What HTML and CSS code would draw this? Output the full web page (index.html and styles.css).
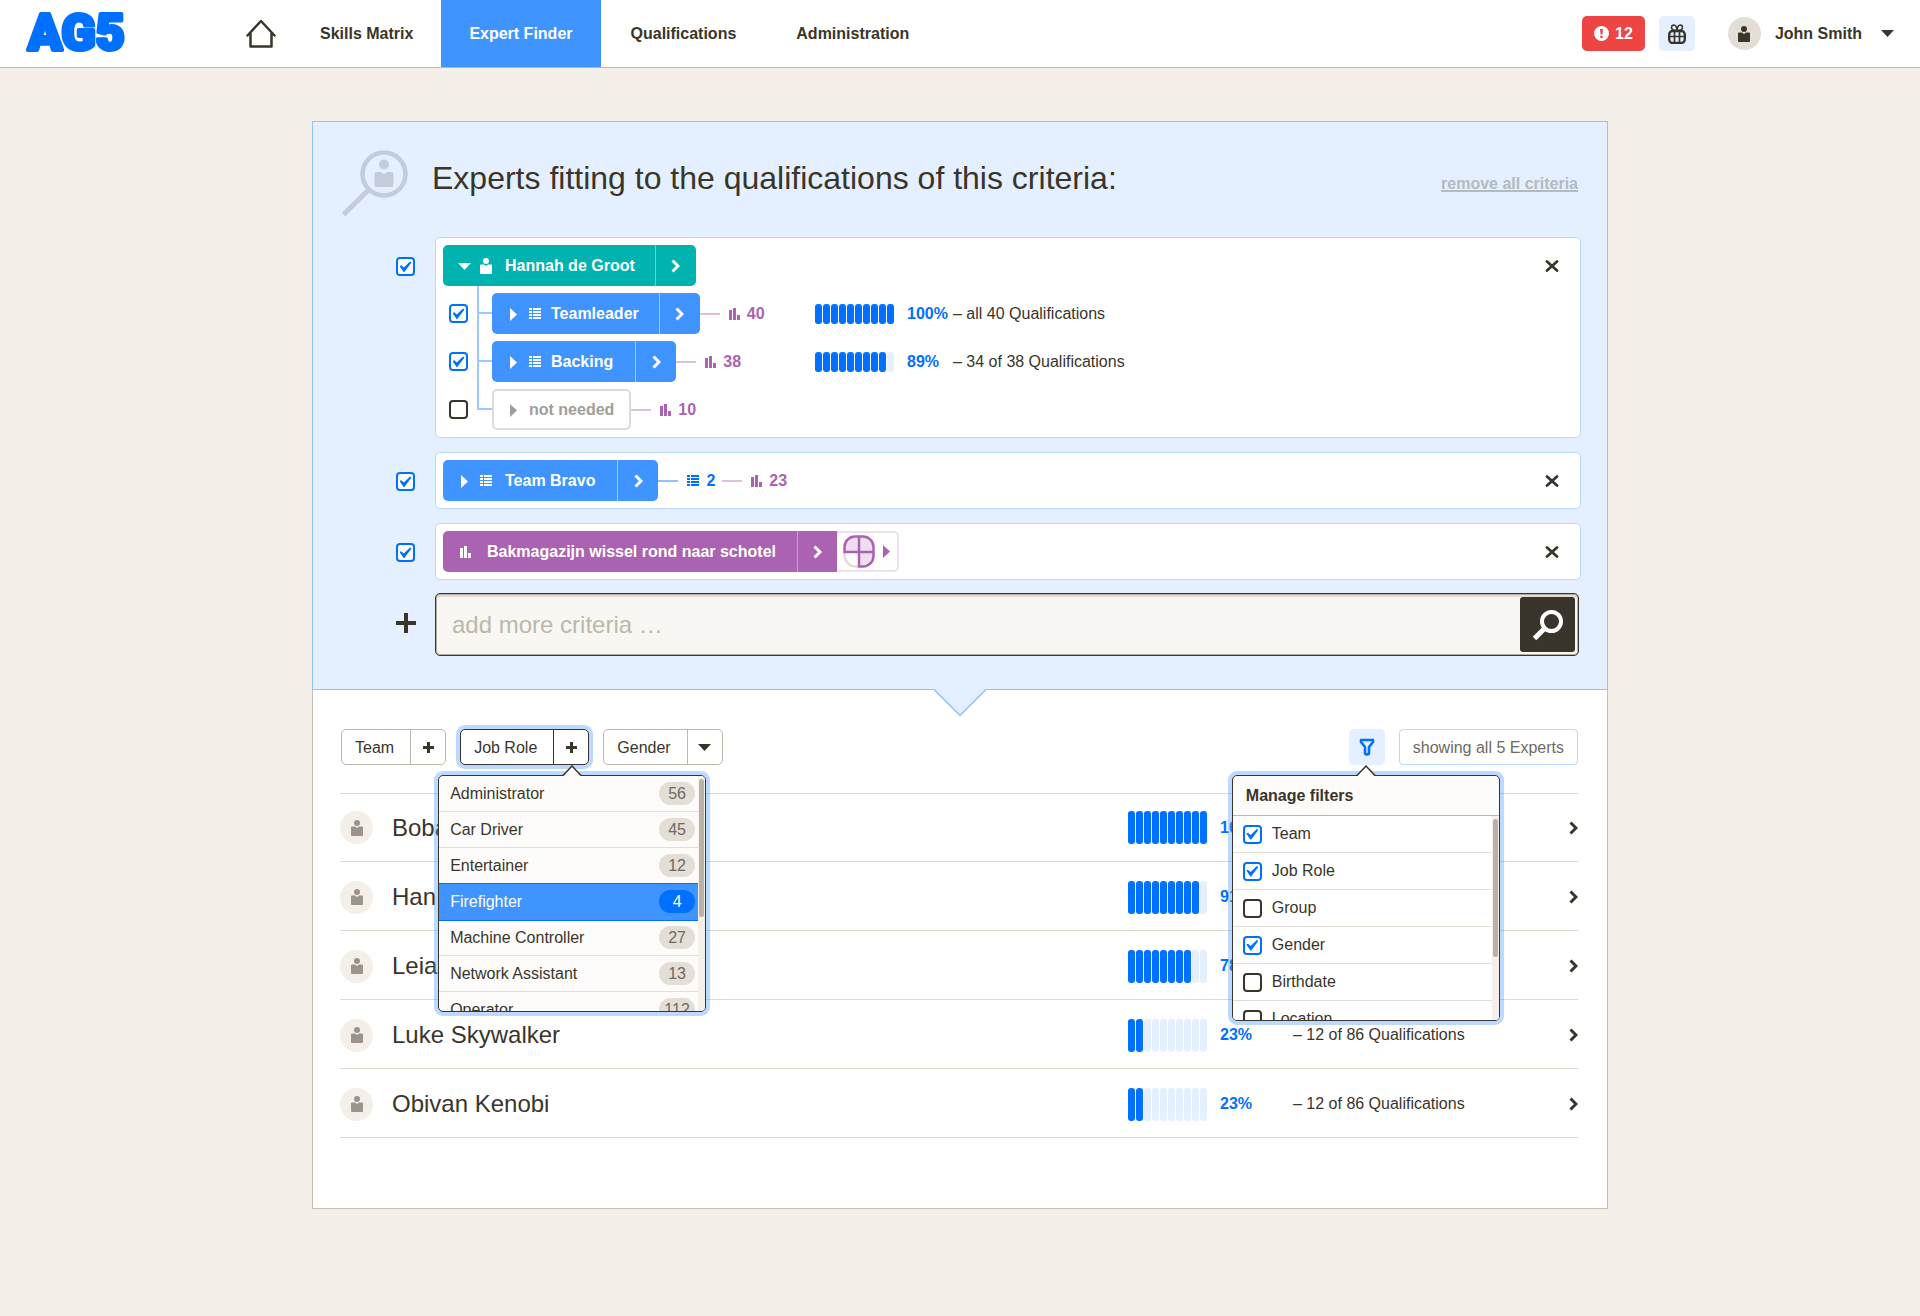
FILE: index.html
```html
<!DOCTYPE html>
<html lang="en">
<head>
<meta charset="utf-8">
<meta name="viewport" content="width=device-width, initial-scale=1">
<title>AG5 – Expert Finder</title>
<link rel="stylesheet" href="styles.css">
</head>
<body>
<svg class="sprite" aria-hidden="true">
  <symbol id="person" viewBox="0 0 12 16"><circle cx="6" cy="3" r="3"/><path d="M1 6.500h3l2 1.500 2-1.500h3a1 1 0 0 1 1 1V15a1 1 0 0 1-1 1H1a1 1 0 0 1-1-1V7.500a1 1 0 0 1 1-1z"/></symbol>
  <symbol id="list" viewBox="0 0 12 12"><path d="M0 0h3v2H0zM4 0h8v2H4zM0 3h3v2H0zM4 3h8v2H4zM0 6h3v2H0zM4 6h8v2H4zM0 9h3v2H0zM4 9h8v2H4z"/></symbol>
  <symbol id="stats" viewBox="0 0 11 12"><path d="M0 2h3v10H0zM4 0h3v12H4zM8 7h3v5H8z"/></symbol>
  <symbol id="down" viewBox="0 0 13 7"><path d="M0 0h13L6.500 7z"/></symbol>
  <symbol id="right" viewBox="0 0 7 13"><path d="M0 0l7 6.500-7 6.500z"/></symbol>
  <symbol id="chevron" viewBox="0 0 9 14"><path d="M1.500 1.500L7 7l-5.500 5.500" fill="none" stroke="currentColor" stroke-width="3"/></symbol>
  <symbol id="close" viewBox="0 0 14 14"><path d="M2 2.500l10 9M12 2.500L2 11.500" fill="none" stroke="currentColor" stroke-width="2.800" stroke-linecap="round"/></symbol>
  <symbol id="plus" viewBox="0 0 20 20"><path d="M8 0h4v8h8v4h-8v8H8v-8H0V8h8z"/></symbol>
  <symbol id="plus-small" viewBox="0 0 11 11"><path d="M4 0h3v4h4v3H7v4H4V7H0V4h4z"/></symbol>
</svg>

<header class="topbar">
  <a class="logo" href="#" aria-label="AG5 home">
    <svg width="112" height="66" viewBox="0 0 112 66"><text x="3" y="50">AG5</text></svg>
  </a>
  <nav class="nav" aria-label="Main">
    <a class="nav-home" href="#" aria-label="Home"><svg width="30" height="30" viewBox="0 0 30 30" fill="none" stroke="currentColor" stroke-width="2.500" stroke-linejoin="round" stroke-linecap="round"><path d="M1.500 16.500L15 2l13.500 14.500M4.500 14v13.500h21V14"/></svg></a>
    <a class="nav-link" href="#">Skills Matrix</a>
    <a class="nav-link active" href="#" aria-current="page">Expert Finder</a>
    <a class="nav-link" href="#">Qualifications</a>
    <a class="nav-link" href="#">Administration</a>
  </nav>
  <div class="account">
    <button class="alerts" type="button"><svg width="15" height="15" viewBox="0 0 15 15"><circle cx="7.500" cy="7.500" r="7.500" fill="#fff"/><path d="M6 3h3l-.6 5.500H6.600zM6.300 9.700h2.400V12H6.300z" fill="#ee4444"/></svg>12</button>
    <button class="gift" type="button" aria-label="What's new"><svg width="18" height="20" viewBox="0 0 18 20" fill="none" stroke="currentColor"><path d="M9 6.500C6 6.500 3.500 5.500 3.500 3.500S5 1 6 1s3 1.500 3 5.500C9 2.500 11 1 12 1s2.500.5 2.500 2.500S12 6.500 9 6.500z" stroke-width="1.500"/><rect x="1.200" y="7" width="15.600" height="12" rx="3.500" stroke-width="2.400"/><path d="M1 12.500h16M6.500 7v12M11.500 7v12" stroke-width="1.700"/></svg></button>
    <button class="user" type="button"><span class="avatar avatar-user"><svg width="12" height="16"><use href="#person"/></svg></span>John Smith<svg class="user-caret" width="13" height="7"><use href="#down"/></svg></button>
  </div>
</header>

<main class="panel">
  <section class="criteria">
    <div class="criteria-head">
      <svg class="finder" width="66" height="66" viewBox="0 0 66 66" aria-hidden="true"><circle cx="42" cy="24" r="21.500" fill="none" stroke="#c4cbd9" stroke-width="4.500"/><path d="M27 39.500L1.500 64.500" stroke="#c4cbd9" stroke-width="5"/><circle cx="42" cy="14.500" r="5" fill="#c4cbd9"/><path d="M34.500 22H39l3 2.500 3-2.500h4.500a2 2 0 0 1 2 2V35a2 2 0 0 1-2 2h-15a2 2 0 0 1-2-2V24a2 2 0 0 1 2-2z" fill="#c4cbd9"/></svg>
      <div class="headline">
        <h1>Experts fitting to the qualifications of this criteria:</h1>
        <a class="remove-all" href="#">remove all criteria</a>
      </div>
    </div>

    <div class="criterion">
      <div class="pick"><input type="checkbox" checked aria-label="Use Hannah de Groot"></div>
      <div class="card">
        <div class="card-body">
          <div class="chip teal">
            <button class="chip-main" type="button"><span class="caret"><svg width="13" height="7"><use href="#down"/></svg></span><svg class="kind" width="12" height="16"><use href="#person"/></svg>Hannah de Groot</button>
            <button class="chip-go" type="button" aria-label="Open Hannah de Groot"><svg width="9" height="14"><use href="#chevron"/></svg></button>
          </div>
          <ul class="tree">
            <li>
              <div class="branch">
                <input type="checkbox" checked aria-label="Use Teamleader">
                <div class="chip blue">
                  <button class="chip-main" type="button"><span class="caret"><svg width="7" height="13"><use href="#right"/></svg></span><svg class="kind" width="12" height="12"><use href="#list"/></svg>Teamleader</button>
                  <button class="chip-go" type="button" aria-label="Open Teamleader"><svg width="9" height="14"><use href="#chevron"/></svg></button>
                </div>
                <span class="stat purple"><svg width="11" height="12"><use href="#stats"/></svg>40</span>
              </div>
              <div class="score"><span class="bars"><i class="on"></i><i class="on"></i><i class="on"></i><i class="on"></i><i class="on"></i><i class="on"></i><i class="on"></i><i class="on"></i><i class="on"></i><i class="on"></i></span><b>100%</b><span>– all 40 Qualifications</span></div>
            </li>
            <li>
              <div class="branch">
                <input type="checkbox" checked aria-label="Use Backing">
                <div class="chip blue wide">
                  <button class="chip-main" type="button"><span class="caret"><svg width="7" height="13"><use href="#right"/></svg></span><svg class="kind" width="12" height="12"><use href="#list"/></svg>Backing</button>
                  <button class="chip-go" type="button" aria-label="Open Backing"><svg width="9" height="14"><use href="#chevron"/></svg></button>
                </div>
                <span class="stat purple"><svg width="11" height="12"><use href="#stats"/></svg>38</span>
              </div>
              <div class="score"><span class="bars"><i class="on"></i><i class="on"></i><i class="on"></i><i class="on"></i><i class="on"></i><i class="on"></i><i class="on"></i><i class="on"></i><i class="on"></i><i></i></span><b>89%</b><span>– 34 of 38 Qualifications</span></div>
            </li>
            <li>
              <div class="branch">
                <input type="checkbox" aria-label="Use not needed">
                <div class="chip muted">
                  <button class="chip-main" type="button"><span class="caret"><svg width="7" height="13"><use href="#right"/></svg></span>not needed</button>
                </div>
                <span class="stat purple"><svg width="11" height="12"><use href="#stats"/></svg>10</span>
              </div>
            </li>
          </ul>
        </div>
        <button class="close" type="button" aria-label="Remove Hannah de Groot"><svg width="14" height="14"><use href="#close"/></svg></button>
      </div>
    </div>

    <div class="criterion">
      <div class="pick"><input type="checkbox" checked aria-label="Use Team Bravo"></div>
      <div class="card">
        <div class="card-body line">
          <div class="chip blue wide">
            <button class="chip-main" type="button"><span class="caret"><svg width="7" height="13"><use href="#right"/></svg></span><svg class="kind" width="12" height="12"><use href="#list"/></svg>Team Bravo</button>
            <button class="chip-go" type="button" aria-label="Open Team Bravo"><svg width="9" height="14"><use href="#chevron"/></svg></button>
          </div>
          <span class="stat azure"><svg width="12" height="12"><use href="#list"/></svg>2</span>
          <span class="stat purple next"><svg width="11" height="12"><use href="#stats"/></svg>23</span>
        </div>
        <button class="close" type="button" aria-label="Remove Team Bravo"><svg width="14" height="14"><use href="#close"/></svg></button>
      </div>
    </div>

    <div class="criterion">
      <div class="pick"><input type="checkbox" checked aria-label="Use Bakmagazijn wissel rond naar schotel"></div>
      <div class="card">
        <div class="card-body line">
          <div class="chip violet">
            <button class="chip-main" type="button"><svg class="kind" width="11" height="12"><use href="#stats"/></svg>Bakmagazijn wissel rond naar schotel</button>
            <button class="chip-go" type="button" aria-label="Open Bakmagazijn wissel rond naar schotel"><svg width="9" height="14"><use href="#chevron"/></svg></button>
          </div>
          <button class="level" type="button" aria-label="Required level: 3 of 4"><svg width="32" height="33" viewBox="0 0 32 33"><path d="M1.500 18v2a11.500 11.500 0 0 0 11.500 11.500h2" fill="none" stroke="#e4dfd6" stroke-width="2.500"/><path d="M16 1.500h-4A10.500 10.500 0 0 0 1.500 12v5H16zM16 1.500h4A10.500 10.500 0 0 1 30.500 12v5H16zM16 17h14.500v4A10.500 10.500 0 0 1 20 31.500h-4z" fill="#eedff0" stroke="#ab63b1" stroke-width="2.500"/></svg><svg width="7" height="13"><use href="#right"/></svg></button>
        </div>
        <button class="close" type="button" aria-label="Remove Bakmagazijn wissel rond naar schotel"><svg width="14" height="14"><use href="#close"/></svg></button>
      </div>
    </div>

    <form class="criterion">
      <div class="pick"><svg width="20" height="20" aria-hidden="true"><use href="#plus"/></svg></div>
      <div class="search">
        <input type="text" placeholder="add more criteria …" aria-label="Add more criteria">
        <button type="button" aria-label="Search"><svg width="32" height="32" viewBox="0 0 32 32" fill="none" stroke="currentColor"><circle cx="19.500" cy="12.500" r="9.500" stroke-width="4"/><path d="M13 19L2.500 29.500" stroke-width="5"/></svg></button>
      </div>
    </form>
    <svg class="pointer" width="54" height="28" viewBox="0 0 54 28" aria-hidden="true"><path d="M0 0h54L27 27z" fill="#e4f0ff"/><path d="M0 .5h1L27 26.500 53 .5h1" fill="none" stroke="#91c1ff" stroke-width="1.500"/></svg>
  </section>

  <section class="results">
    <div class="toolbar">
      <div class="filter"><button class="filter-name" type="button">Team</button><button class="filter-add" type="button" aria-label="Add team"><svg width="11" height="11"><use href="#plus-small"/></svg></button></div>
      <div class="anchor">
        <div class="filter open"><button class="filter-name" type="button">Job Role</button><button class="filter-add" type="button" aria-label="Add job role" aria-expanded="true"><svg width="11" height="11"><use href="#plus-small"/></svg></button></div>
        <div class="popup roles">
          <svg class="tip" width="20" height="11" viewBox="0 0 20 11" aria-hidden="true"><path d="M0 11L10 1l10 10z" fill="#fdfcfa"/><path d="M0 10.500h1L10 1l9 9.500h1" fill="none" stroke="#3a352b" stroke-width="1.500"/></svg>
          <div class="popup-scroll">
            <ul class="options">
              <li><button type="button">Administrator<span class="count">56</span></button></li>
              <li><button type="button">Car Driver<span class="count">45</span></button></li>
              <li><button type="button">Entertainer<span class="count">12</span></button></li>
              <li class="current"><button type="button">Firefighter<span class="count">4</span></button></li>
              <li><button type="button">Machine Controller<span class="count">27</span></button></li>
              <li><button type="button">Network Assistant<span class="count">13</span></button></li>
              <li><button type="button">Operator<span class="count">112</span></button></li>
            </ul>
            <div class="track"><div class="thumb"></div></div>
          </div>
        </div>
      </div>
      <div class="filter"><button class="filter-name" type="button">Gender</button><button class="filter-add" type="button" aria-label="Choose gender"><svg width="13" height="7"><use href="#down"/></svg></button></div>
      <div class="anchor manage">
        <button class="funnel" type="button" aria-label="Manage filters" aria-expanded="true"><svg width="16" height="18" viewBox="0 0 16 18" fill="none" stroke="currentColor" stroke-width="2.600" stroke-linejoin="round"><path d="M2 2h12v2l-4 5v5.500a2 2 0 0 1-4 0V9L2 4z"/></svg></button>
        <div class="popup filters">
          <svg class="tip" width="20" height="11" viewBox="0 0 20 11" aria-hidden="true"><path d="M0 11L10 1l10 10z" fill="#fdfcfa"/><path d="M0 10.500h1L10 1l9 9.500h1" fill="none" stroke="#3a352b" stroke-width="1.500"/></svg>
          <h2>Manage filters</h2>
          <div class="popup-scroll">
            <ul class="toggles">
              <li><label><input type="checkbox" checked>Team</label></li>
              <li><label><input type="checkbox" checked>Job Role</label></li>
              <li><label><input type="checkbox">Group</label></li>
              <li><label><input type="checkbox" checked>Gender</label></li>
              <li><label><input type="checkbox">Birthdate</label></li>
              <li><label><input type="checkbox">Location</label></li>
            </ul>
            <div class="track"><div class="thumb"></div></div>
          </div>
        </div>
      </div>
      <div class="showing">showing all 5 Experts</div>
    </div>

    <ul class="experts">
      <li><a href="#"><span class="avatar"><svg width="12" height="16"><use href="#person"/></svg></span><span class="name">Boba</span><span class="bars tall"><i class="on"></i><i class="on"></i><i class="on"></i><i class="on"></i><i class="on"></i><i class="on"></i><i class="on"></i><i class="on"></i><i class="on"></i><i class="on"></i></span><b>100%</b><span></span><svg width="9" height="14"><use href="#chevron"/></svg></a></li>
      <li><a href="#"><span class="avatar"><svg width="12" height="16"><use href="#person"/></svg></span><span class="name">Han</span><span class="bars tall"><i class="on"></i><i class="on"></i><i class="on"></i><i class="on"></i><i class="on"></i><i class="on"></i><i class="on"></i><i class="on"></i><i class="on"></i><i></i></span><b>91%</b><span></span><svg width="9" height="14"><use href="#chevron"/></svg></a></li>
      <li><a href="#"><span class="avatar"><svg width="12" height="16"><use href="#person"/></svg></span><span class="name">Leia</span><span class="bars tall"><i class="on"></i><i class="on"></i><i class="on"></i><i class="on"></i><i class="on"></i><i class="on"></i><i class="on"></i><i class="on"></i><i></i><i></i></span><b>78%</b><span></span><svg width="9" height="14"><use href="#chevron"/></svg></a></li>
      <li><a href="#"><span class="avatar"><svg width="12" height="16"><use href="#person"/></svg></span><span class="name">Luke Skywalker</span><span class="bars tall"><i class="on"></i><i class="on"></i><i></i><i></i><i></i><i></i><i></i><i></i><i></i><i></i></span><b>23%</b><span>– 12 of 86 Qualifications</span><svg width="9" height="14"><use href="#chevron"/></svg></a></li>
      <li><a href="#"><span class="avatar"><svg width="12" height="16"><use href="#person"/></svg></span><span class="name">Obivan Kenobi</span><span class="bars tall"><i class="on"></i><i class="on"></i><i></i><i></i><i></i><i></i><i></i><i></i><i></i><i></i></span><b>23%</b><span>– 12 of 86 Qualifications</span><svg width="9" height="14"><use href="#chevron"/></svg></a></li>
    </ul>
  </section>
</main>
</body>
</html>
```
FILE: styles.css
```css
* { box-sizing: border-box; }

body {
  margin: 0;
  background: #f4efe8;
  color: #3a352b;
  font: 16px/20px "Liberation Sans", Arial, sans-serif;
}

button, input { font: inherit; color: inherit; }
button { margin: 0; padding: 0; border: 0; background: none; cursor: pointer; }
a { color: inherit; text-decoration: none; }
ul { list-style: none; margin: 0; padding: 0; }
h1, h2 { margin: 0; }
svg { display: block; flex: none; fill: currentColor; }
svg[fill="none"] { fill: none; }
.sprite { position: absolute; width: 0; height: 0; }

input[type="checkbox"] {
  appearance: none;
  flex: none;
  display: grid;
  place-items: center;
  width: 19px;
  height: 19px;
  margin: 0;
  border: 2px solid #3a352b;
  border-radius: 4px;
  background: #fff;
}
input[type="checkbox"]:checked { border-color: #0070ff; }
input[type="checkbox"]:checked::before {
  content: "";
  width: 12px;
  height: 11px;
  background: #0070ff;
  clip-path: polygon(0 46%, 14% 38%, 36% 60%, 88% 4%, 100% 14%, 40% 100%, 34% 100%);
}

/* Top bar */
.topbar {
  display: flex;
  align-items: stretch;
  height: 68px;
  padding: 0 26px 0 25px;
  border-bottom: 1px solid #bdb7ab;
  background: #fff;
}
.logo { width: 213px; }
.logo text {
  font: 900 50px Roboto, sans-serif;
  fill: #0070ff;
  stroke: #0070ff;
  stroke-width: 4px;
  stroke-linejoin: round;
}
.nav { display: flex; font-weight: bold; }
.nav a { display: flex; align-items: center; }
.nav-home { padding: 0 16px 0 8px; }
.nav-link { padding: 0 30px; }
.nav-home + .nav-link { padding: 0 28px; }
.nav-link.active { padding: 0 28px; background: #4094ff; color: #fff; }
.account { display: flex; align-items: center; margin-left: auto; font-weight: bold; }
.alerts {
  display: flex;
  align-items: center;
  gap: 6px;
  height: 35px;
  padding: 0 12px;
  border-radius: 5px;
  background: #ee4444;
  color: #fff;
  font-weight: bold;
}
.gift {
  display: grid;
  place-items: center;
  width: 36px;
  height: 35px;
  margin-left: 14px;
  border-radius: 5px;
  background: #e4f0ff;
}
.user { display: flex; align-items: center; margin-left: 33px; font-weight: bold; }
.user-caret { margin-left: 19px; }
.avatar {
  display: grid;
  place-items: center;
  width: 33px;
  height: 33px;
  border-radius: 50%;
  background: #f4efe8;
  color: #9a948b;
}
.avatar-user { margin-right: 14px; background: #e4dfd6; color: #3a352b; }

/* Panel */
.panel { max-width: 1296px; margin: 53px auto 106px; }
.criteria {
  position: relative;
  padding: 28px 26px 33px 0;
  border: 1px solid #91c1ff;
  background: #e4f0ff;
}
.criteria-head { display: flex; padding-left: 29px; margin-bottom: 21px; }
.headline {
  display: flex;
  flex: 1;
  align-items: baseline;
  justify-content: space-between;
  margin-left: 24px;
  padding-right: 3px;
}
h1 { font-size: 32px; font-weight: normal; line-height: 56px; }
.remove-all { color: #b3bac2; font-weight: bold; text-decoration: underline; text-decoration-thickness: 2px; }

.criterion { display: flex; }
.criterion + .criterion { margin-top: 14px; }
form.criterion.criterion { margin-top: 13px; }
.pick { flex: none; display: flex; justify-content: center; width: 39px; margin: 20px 10px 0 73px; }
.card {
  display: flex;
  flex: 1;
  align-items: flex-start;
  padding: 7px;
  border: 1px solid #b9d7ff;
  border-radius: 5px;
  background: #fff;
}
.card-body { flex: 1; }
.card-body.line { display: flex; align-items: center; }
.close { display: grid; place-items: center; width: 42px; height: 41px; }

.chip { display: inline-flex; height: 41px; border-radius: 5px; color: #fff; vertical-align: top; }
.chip button { display: flex; align-items: center; justify-content: center; font-weight: bold; }
.chip .chip-main { padding: 1px 20px 0 15px; }
.chip.wide .chip-main { padding-right: 22px; }
.chip-go { width: 41px; border-left: 1px solid #9dc8ff; }
.caret { display: flex; justify-content: center; width: 12px; margin-right: 10px; }
.kind { margin-right: 13px; }
.tree .kind { margin-right: 10px; }
.teal { background: #00b2b0; }
.teal .chip-go { border-color: #66d1d0; }
.blue { background: #4094ff; }
.violet { background: #ab63b1; border-radius: 5px 0 0 5px; }
.violet .chip-go { width: 40px; border-color: #cda1d0; }
.violet .chip-main { padding: 1px 21px 0 17px; }
.violet .kind { margin-right: 16px; }
.muted { border: 2px solid #dbdbdb; background: #fff; color: #a09e99; }
.muted .chip-main { padding: 1px 15px 0 13px; }
.level {
  display: flex;
  align-items: center;
  gap: 8px;
  height: 41px;
  padding: 0 7px 0 6px;
  border: 2px solid #eedff0;
  border-left: 0;
  border-radius: 0 5px 5px 0;
  color: #ab63b1;
}

.stat { display: flex; align-items: center; gap: 7px; font-weight: bold; }
.stat::before { content: ""; width: 20px; height: 2px; margin-right: 2px; }
.stat.purple { color: #ab63b1; }
.stat.purple::before { background: #ddbfe0; }
.stat.azure { color: #0070ff; }
.stat.azure::before { background: #91c1ff; }
.stat.next { margin-left: 7px; }

.tree li { position: relative; display: grid; grid-template-columns: 372px 1fr; margin-top: 7px; }
.tree li::before {
  content: "";
  position: absolute;
  left: 34px;
  top: -28px;
  width: 13px;
  height: 47px;
  border: solid #9dc8ff;
  border-width: 0 0 2px 2px;
}
.tree li:first-child::before { top: -7px; height: 26px; }
.branch { display: flex; align-items: center; padding-left: 6px; }
.branch .chip { margin-left: 24px; }

.score { display: flex; align-items: center; }
.bars { display: flex; gap: 1px; width: 79px; height: 20px; }
.bars i { flex: 1; border-radius: 3px; background: #e4f0ff; }
.bars .on { background: #0070ff; }
.bars.tall { height: 33px; }
.score b { width: 46px; margin-left: 13px; color: #0070ff; }

.search {
  display: flex;
  flex: 1;
  padding: 3px;
  margin-right: 2px;
  border: 1px solid #3a352b;
  border-radius: 5px;
  background: #f8f7f3;
  box-shadow: inset 0 0 0 1px #b5afa6, inset 0 3px #e4dcd1;
}
.search input { flex: 1; min-width: 0; padding: 0 13px; border: 0; outline: 0; background: none; font-size: 24px; }
.search input::placeholder { color: #bdb7ab; opacity: 1; }
.search button {
  display: grid;
  place-items: center;
  width: 55px;
  height: 55px;
  border-radius: 3px;
  background: #3a352b;
  color: #fff;
}
.pointer { position: absolute; left: 50%; bottom: -28px; margin-left: -27px; }

/* Results */
.results { padding: 39px 29px 70px 27px; border: solid #c4beb3; border-width: 0 1px 1px; background: #fff; }
.toolbar { display: flex; gap: 14px; padding-left: 1px; }
.anchor { position: relative; }
.filter {
  display: flex;
  height: 36px;
  border: 1px solid #bdb7ab;
  border-radius: 5px;
  background: #fff;
}
.filter-name { padding: 1px 16px 0 13px; }
.filter-add { display: grid; place-items: center; width: 35px; border-left: 1px solid #bdb7ab; }
.filter.open { border-color: #3a352b; box-shadow: 0 0 0 4px rgba(64, 148, 255, .35); }
.open .filter-add { border-color: #3a352b; }
.manage { margin-left: auto; }
.funnel { display: grid; place-items: center; width: 36px; height: 36px; border-radius: 5px; background: #e4f0ff; color: #0070ff; }
.showing { padding: 8px 13px 6px; border: 1px solid #b9d7ff; border-radius: 4px; color: #6f6a61; }

.popup {
  position: absolute;
  z-index: 2;
  top: 46px;
  display: flex;
  flex-direction: column;
  width: 268px;
  border: 1px solid #3a352b;
  border-radius: 5px;
  background: #fdfcfa;
  box-shadow: 0 0 0 4px rgba(64, 148, 255, .35);
}
.roles { left: -22px; height: 237px; }
.filters { left: -117px; height: 246px; }
.tip { position: absolute; left: 123px; top: -11px; }
.popup h2 { padding: 10px 13px; border-bottom: 1px solid #bdb7ab; font-size: 16px; line-height: 19px; }
.popup-scroll { display: flex; flex: 1; min-height: 0; overflow: hidden; border-radius: 4px; }
.popup-scroll ul { flex: 1; }
.options li { height: 36px; border-bottom: 1px solid #e4dfd6; }
.options button { display: flex; align-items: center; justify-content: space-between; width: 100%; height: 35px; padding: 0 3px 0 11px; }
.options .current {
  position: relative;
  height: 38px;
  margin: -1px 0;
  border: solid #0070ff;
  border-width: 1px 0;
  background: #4094ff;
  color: #fff;
}
.count { width: 36px; border-radius: 12px; background: #e4dfd6; color: #6f6a61; line-height: 23px; text-align: center; }
.current .count { background: #0070ff; color: #fff; }
.track { width: 7px; padding: 3px 1px; background: #f4efe8; }
.thumb { height: 138px; border-radius: 3px; background: #b9b3a7; }
.filters .popup-scroll { background: #fff; }
.toggles li { border-bottom: 1px solid #e4dfd6; }
.toggles label { display: flex; align-items: center; gap: 10px; height: 36px; padding-left: 10px; }

.experts { margin-top: 28px; border-top: 1px solid #dfd9cf; }
.experts a {
  display: grid;
  grid-template-columns: 52px 1fr 92px 73px 276px 9px;
  align-items: center;
  height: 69px;
  padding-top: 2px;
  border-bottom: 1px solid #dfd9cf;
}
.experts li:first-child a { height: 68px; padding-top: 0; }
.experts b { color: #0070ff; }
.name { font-size: 24px; line-height: 28px; }
```
